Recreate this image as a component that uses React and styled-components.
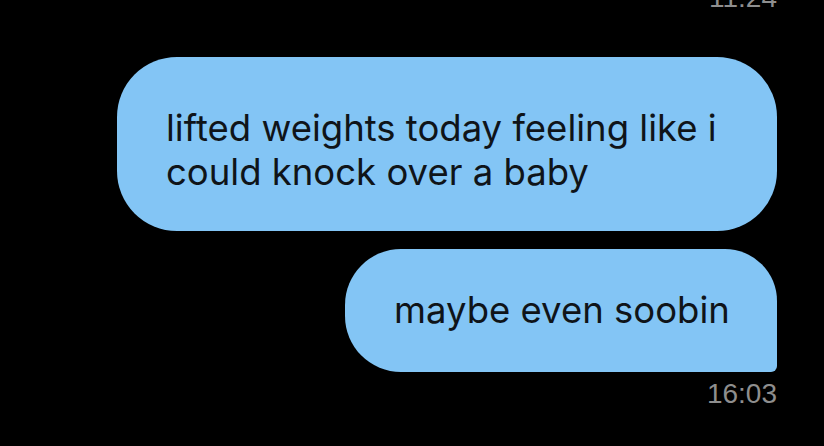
import React from 'react';
import styled, { createGlobalStyle } from 'styled-components';

// page reset: black chat background
const GlobalStyle = createGlobalStyle`
	html, body {
		margin: 0;
		padding: 0;
		background: #000000;
	}
	body {
		width: 824px;
		height: 446px;
		overflow: hidden;
	}
`;

// the conversation column, everything pushed to the right
const Thread = styled.div`
	display: flex;
	flex-direction: column;
	align-items: flex-end;
	padding: 0 47px 0 0;
	height: 446px;
	box-sizing: border-box;
`;

// small grey time under a group of messages
const Time = styled.div`
	font-family: 'Liberation Sans', Arial, sans-serif;
	font-size: 28px;
	line-height: 30px;
	color: #8e8e8e;
	margin-top: ${(p) => p.$top || 0}px;
	margin-bottom: ${(p) => p.$bottom || 0}px;
`;

// sent message bubble
const Bubble = styled.div`
	box-sizing: border-box;
	background: #83c5f5;
	color: #0f1419;
	font-family: Inter, 'Noto Sans', sans-serif;
	font-size: 36.5px;
	line-height: 44px;
	width: ${(p) => p.$width}px;
	height: ${(p) => p.$height}px;
	padding: ${(p) => p.$padding};
	border-radius: ${(p) => (p.$tail ? '56px 52px 6px 56px' : '60px')};
	margin-bottom: ${(p) => p.$gap || 0}px;
	display: flex;
	align-items: center;
`;

const App = () => {
	return (
		<>
			<GlobalStyle />
			<Thread>
				<Time $top={-17} $bottom={44}>
					11:24
				</Time>
				<Bubble $width={660} $height={174} $padding='12px 40px 0 49px' $gap={18}>
					lifted weights today feeling like i could knock over a baby
				</Bubble>
				<Bubble $width={432} $height={123} $padding='0 10px 2px 49px' $tail>
					maybe even soobin
				</Bubble>
				<Time $top={7}>16:03</Time>
			</Thread>
		</>
	);
};

export default App;
